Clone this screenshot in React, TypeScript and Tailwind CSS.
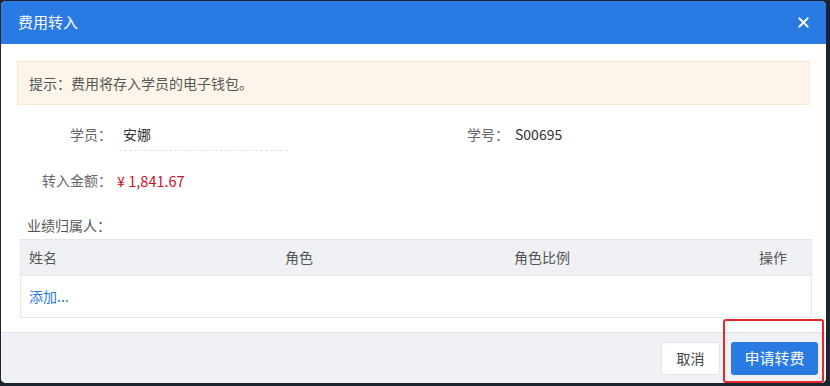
import { X } from "lucide-react";

const font = { fontFamily: '"Noto Sans CJK SC", "Noto Sans", sans-serif' };

export default function App() {
  return (
    <div className="w-[830px] h-[386px] bg-[#1d2330] pl-[1px] pt-[1px]" style={font}>
      <div className="relative w-[825px] h-[382px] bg-white rounded-[5px] overflow-hidden flex flex-col">
        {/* Header */}
        <div className="h-[43px] bg-[#2a7ae4] flex items-center justify-between pl-[17px] pr-[14px] shrink-0">
          <span className="text-[15px] text-white">费用转入</span>
          <X className="w-[17px] h-[17px] text-white" strokeWidth={2.5} />
        </div>

        {/* Body */}
        <div className="flex-1 px-[16px] pt-[17px]">
          <div className="h-[44px] bg-[#fdf5ea] border border-[#fbe7d0] flex items-center pl-[11px] text-[14px] text-[#555]">
            提示：费用将存入学员的电子钱包。
          </div>

          <div className="flex mt-[14px] text-[14px]">
            <div className="w-[450px] flex items-start">
              <span className="w-[95px] text-right text-[#666] leading-[30px]">学员：</span>
              <span className="ml-[7px] w-[169px] border-b border-dashed border-[#e3e3e3] pl-[4px] leading-[30px] text-[#333] pb-[1px]">安娜</span>
            </div>
            <div className="flex items-start">
              <span className="text-[#666] leading-[30px]">学号：</span>
              <span className="ml-[6px] text-[#333] leading-[30px]">S00695</span>
            </div>
          </div>

          <div className="flex items-center mt-[19px] text-[14px]">
            <span className="w-[95px] text-right text-[#666]">转入金额：</span>
            <span className="ml-[5px] text-[14.5px] text-[#cc1126]">¥ 1,841.67</span>
          </div>

          <div className="mt-[23px] pl-[10px] text-[14px] text-[#555]">业绩归属人：</div>

          <div className="mt-[3px] ml-[3px] w-[792px] border border-[#e4e7ec] text-[14px]">
            <div className="h-[36px] bg-[#eff1f5] border-b border-[#e4e7ec] grid grid-cols-[264px_229px_1fr_60px] items-center text-[#555]">
              <span className="pl-[8px]">姓名</span>
              <span>角色</span>
              <span>角色比例</span>
              <span className="text-right pr-[24px]">操作</span>
            </div>
            <div className="h-[41px] flex items-center pl-[8px] text-[#2a7ae4]">添加...</div>
          </div>
        </div>

        {/* Footer */}
        <div className="h-[51px] shrink-0 bg-[#eff1f4] border-t border-[#dfe3e8] flex items-center justify-end gap-[11px] pr-[8px]">
          <button className="w-[59px] h-[33px] bg-white border border-[#e2e5ea] rounded-[3px] text-[14px] text-[#444]">取消</button>
          <button className="w-[87px] h-[33px] bg-[#2a7ae4] rounded-[3px] text-[15px] text-white">申请转费</button>
        </div>

        {/* annotation */}
        <div className="absolute left-[722px] top-[318px] w-[101px] h-[64px] border-2 border-[#e5262b] rounded-[3px]" />
      </div>
    </div>
  );
}
